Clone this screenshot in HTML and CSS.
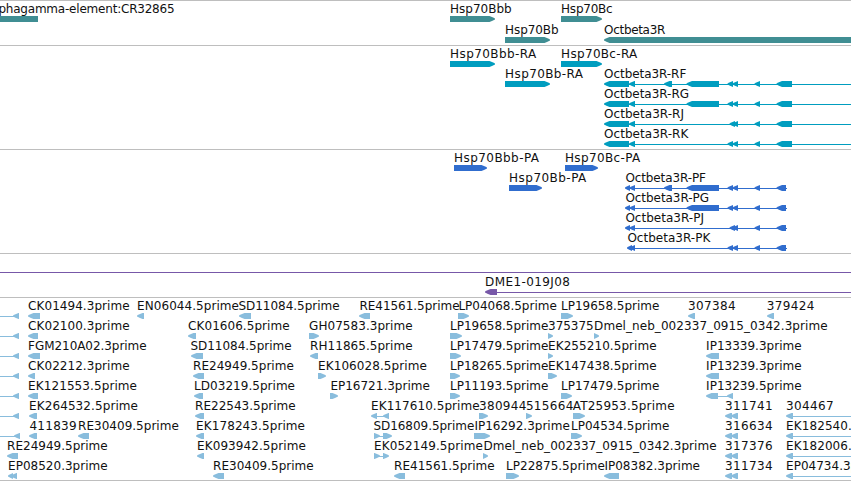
FILE: index.html
```html
<!DOCTYPE html>
<html lang="en">
<head>
<meta charset="utf-8">
<title>Genome tracks</title>
<link rel="stylesheet" href="styles.css">
</head>
<body>
<main class="browser" id="browser"></main>
<script src="tracks.js"></script>
</body>
</html>
```
FILE: styles.css
```css
body {
  margin: 0;
  background: #fff;
  overflow: hidden;
}

.browser {
  display: flex;
  flex-direction: column;
  width: 851px;
  height: 481px;
  box-sizing: border-box;
  border-bottom: 1px solid #bebebe;
  overflow: hidden;
}

.track {
  display: flex;
  flex-direction: column;
  border-top: 1px solid #bebebe;
  padding: 1px 0 2px;
}

.track:last-child {
  padding-bottom: 1px;
}

.row {
  display: block;
  flex: none;
  width: 851px;
  height: 20px;
  overflow: visible;
}

.label {
  font: 12px "DejaVu Sans", sans-serif;
  fill: #111;
}

.genes { gap: 1px; color: #408e93; }
.transcripts { color: #009dbf; }
.proteins { color: #306dce; }
.clones { color: #7758a8; }
.ests { color: #89bddd; }

.arrow, .intron {
  fill: currentColor;
}
```
FILE: tracks.js
```js
// Row: [labels "text|start|end", exons "L|R start end", introns "start end"]
const neb = 'Dmel_neb_002337_0915_0342.3prime';
const tracks = [
  ['genes', [
    [['phagamma-element:CR32865|-1|174.3', 'Hsp70Bbb|450.7|511.3', 'Hsp70Bc|561.7|612.3'],
      'L -20 38,R 450 495,R 561 602', ''],
    [['Hsp70Bb|505.7|558.3', 'Octbeta3R|604.7|665'], 'R 505 550,L 604 870', '']
  ]],
  ['transcripts', [
    [['Hsp70Bbb-RA|450.7|536', 'Hsp70Bc-RA|561.7|637'], 'R 450 495,R 561 602', ''],
    [['Hsp70Bb-RA|505.7|582.7', 'Octbeta3R-RF|604.7|686'],
      'R 505 550,L 604 629,L 629 635,L 664 672,L 686.5 719,L 727.5 733,L 732.5 738,L 754.5 760,L 776.5 792', '629 851'],
    [['Octbeta3R-RG|604.7|688.7'],
      'L 604 629,L 629 635,L 686.5 719,L 727.5 733,L 732.5 738,L 754.5 760,L 776.5 792', '629 851'],
    [['Octbeta3R-RJ|604.7|683.7'],
      'L 604 629,L 629 635,L 729.5 735,L 732.5 738,L 754.5 760,L 776.5 792', '629 851'],
    [['Octbeta3R-RK|604.7|688'],
      'L 604 629,L 629 635,L 727.5 733,L 732.5 738,L 754.5 760,L 776.5 792', '629 851']
  ]],
  ['proteins', [
    [['Hsp70Bbb-PA|454.7|538.7', 'Hsp70Bc-PA|565.5|640'], 'R 454 487,R 565 598', ''],
    [['Hsp70Bb-PA|509.7|586', 'Octbeta3R-PF|626|705.7'],
      'R 509 542,L 625 630,L 629.5 635,L 664 672,L 686.5 719,L 727.5 733,L 732.5 738,L 754.5 760,L 776.5 786', '627 787'],
    [['Octbeta3R-PG|626|708.7'],
      'L 625 630,L 629.5 635,L 686.5 719,L 727.5 733,L 732.5 738,L 754.5 760,L 776.5 786', '627 787'],
    [['Octbeta3R-PJ|626|703.7'],
      'L 625 630,L 629.5 635,L 729.5 735,L 732.5 738,L 754.5 760,L 776.5 786', '627 787'],
    [['Octbeta3R-PK|628|710'],
      'L 627 632,L 629.5 635,L 727.5 733,L 732.5 738,L 754.5 760,L 776.5 786', '629 787']
  ]],
  ['clones', [
    [[], '', '0 851'],
    [['DME1-019J08|485.7|569.5'], 'L 485 497', '490 851']
  ]],
  ['ests', [
    [['CK01494.3prime|28.7|129.3', 'EN06044.5prime|137.7|238.7', 'SD11084.5prime|239|339.3', 'RE41561.5prime|360|459.3', 'LP04068.5prime|459|556.5', 'LP19658.5prime|561.7|659', '307384|688.7|735.3', '379424|767.3|814'],
      'L 13 19,L 28 40,L 137 144,L 239 251,L 359 370,R 458 469,R 561 573,L 688 695,L 767 774', '0 17'],
    [['CK02100.3prime|28.7|129.3', 'CK01606.5prime|188.7|289.3', 'GH07583.3prime|309.7|412.3', 'LP19658.5prime|450.7|548', '375375|548.7|593.3', neb + '|594.7|827.3'],
      'L 13 19,L 28 38,L 188 196,R 309 319,R 450 462,R 548 553,R 594 599', '0 17'],
    [['FGM210A02.3prime|28.7|146.3', 'SD11084.5prime|191|291.3', 'RH11865.5prime|310.7|412.3', 'LP17479.5prime|450.7|548', 'EK255210.5prime|548.7|656.3', 'IP13339.3prime|706.7|801.3'],
      'L 13 19,L 28 40,L 191 203,L 310 318,R 450 461,R 548 553,L 706 719', '0 17'],
    [['CK02212.3prime|28.7|129.3', 'RE24949.5prime|193.7|293.5', 'EK106028.5prime|318.7|426.5', 'LP18265.5prime|450.7|548', 'EK147438.5prime|548.7|656.3', 'IP13239.3prime|706.7|801.3'],
      'L 13 19,L 28 35,L 193 204,R 318 326,R 450 460,R 548 557,L 706 719', '0 17'],
    [['EK121553.5prime|28.7|136.7', 'LD03219.5prime|194.7|294.7', 'EP16721.3prime|331|429.5', 'LP11193.5prime|450.7|548', 'LP17479.5prime|561.7|659', 'IP13239.5prime|706.7|801.3'],
      'L 13 19,L 28 38,L 194 203,R 330 338,R 450 460,R 561 572,L 706 718,L 727 733', '0 17,718 730'],
    [['EK264532.5prime|29.7|137.7', 'RE22543.5prime|195.7|295.3', 'EK117610.5prime|371.7|479.3', '380944|479.7|526', '515664|526.5|573', 'AT25953.5prime|573.3|674.3', '311741|725.7|772.3', '304467|786.7|833.3'],
      'L 13 19,L 29 37,L 195 204,L 371 377,L 383 389,R 479 488,R 526 532,R 573 585,L 725 732,L 731 738,L 786 793', '0 17,375 388,790 851'],
    [['411839|30|76.3', 'RE30409.5prime|78.7|178.5', 'EK178243.5prime|196.7|304.7', 'SD16809.5prime|374|474', 'IP16292.3prime|475|569.5', 'LP04534.5prime|571.7|669', '316634|725.7|772.3', 'EK182540.5prime|786.7|894.7'],
      'L 14 20,L 29 37,L 78 89,L 196 204,R 374 380,R 383 392,R 474 490,R 571 582,L 725 732,L 731 738,L 786 793', '0 18,376 386,790 851'],
    [['RE24949.5prime|7.7|107.3', 'EK093942.5prime|197.7|305.5', 'EK052149.5prime|374.7|482.5', neb + '|484|716.3', '317376|725.7|772.3', 'EK182006.5prime|786.7|894.7'],
      'L 7 18,L 197 204,R 374 380,R 383 389,R 483 488,L 725 732,L 731 738,L 786 793', '376 386,790 851'],
    [['EP08520.3prime|8.7|107.3', 'RE30409.5prime|213.7|313.3', 'RE41561.5prime|394.7|494.3', 'LP22875.5prime|506.7|604.5', 'IP08382.3prime|605|699.7', '311734|725.7|772.3', 'EP04734.3prime|786.7|885.3'],
      'L 8 13,L 11 17,L 213 224,L 394 405,R 506 519,L 604 619,L 725 732,L 731 738,L 786 793', '790 851']
  ]]
];

function arrow(spec) {
  const [dir, s, e] = spec.split(' ');
  const a = +s, b = +e;
  const head = Math.min(5.5, b - a);
  const mid = head * 0.45;
  const points = dir === 'L'
    ? [[b, 14], [a + head, 14], [a + mid, 15.2], [a, 16.6], [a, 17.4], [a + mid, 18.8], [a + head, 20], [b, 20]]
    : [[a, 14], [b - head, 14], [b - mid, 15.2], [b, 16.6], [b, 17.4], [b - mid, 18.8], [b - head, 20], [a, 20]];
  return `<polygon class="arrow" points="${points.join(' ')}"/>`;
}

function intron(spec) {
  const [a, b] = spec.split(' ').map(Number);
  return `<rect class="intron" x="${a}" y="17" width="${b - a}" height="1"/>`;
}

function label(spec) {
  const [text, a, b] = spec.split('|');
  return `<text class="label" x="${(a - 0.6).toFixed(1)}" y="11" textLength="${(b - a + 0.9).toFixed(1)}">${text}</text>`;
}

const list = (s, draw) => s ? s.split(',').map(draw).join('') : '';

document.getElementById('browser').innerHTML = tracks.map(([name, rows]) =>
  `<section class="track ${name}">` + rows.map(([labels, exons, introns]) =>
    `<svg class="row" viewBox="0 0 851 20">${list(introns, intron)}${list(exons, arrow)}${labels.map(label).join('')}</svg>`
  ).join('') + '</section>').join('');
```
